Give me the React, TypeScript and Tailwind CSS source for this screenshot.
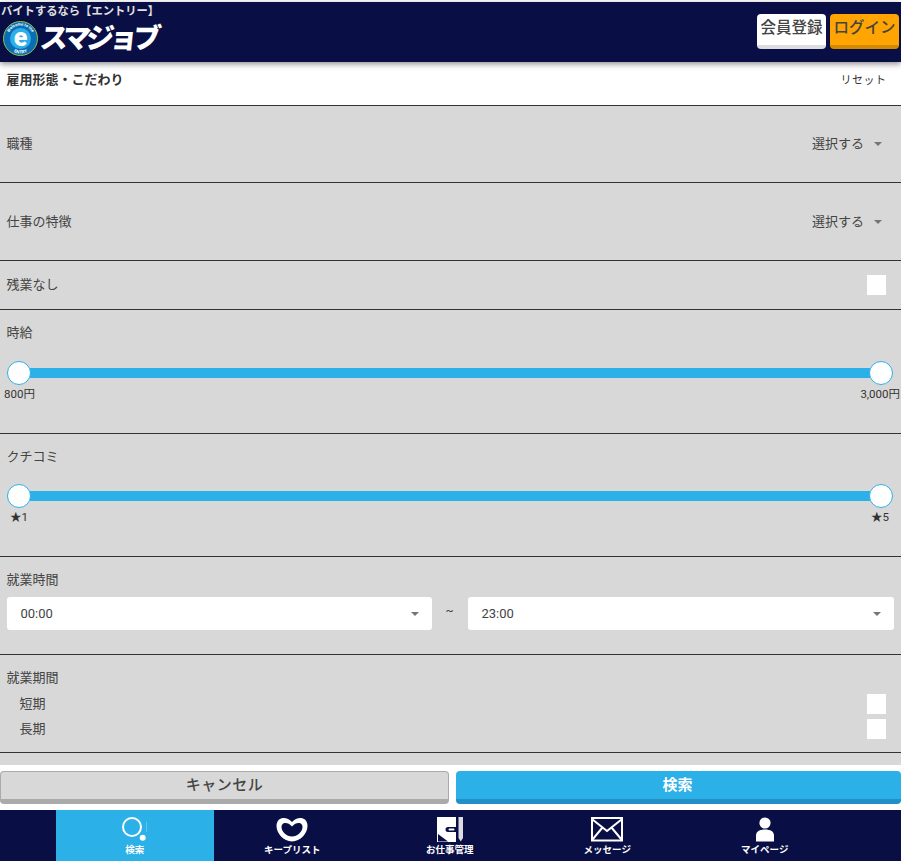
import { ReactNode } from 'react'

const FONT = "font-['Roboto','Noto_Sans_CJK_JP',sans-serif]"

function Caret() {
  return <span className="h-0 w-0 border-x-[4.5px] border-t-[4.5px] border-x-transparent border-t-[#757575]" />
}

function Row({ className, children }: { className: string; children: ReactNode }) {
  return <div className={`border-b border-[#333] px-[6.5px] ${className}`}>{children}</div>
}

function SelectRow({ label, height }: { label: string; height: string }) {
  return (
    <Row className={`flex items-center justify-between ${height}`}>
      <span className="text-[13px] text-[#444]">{label}</span>
      <span className="flex items-center gap-[10px] pr-[12.5px] text-[13px] text-[#444]">
        選択する
        <Caret />
      </span>
    </Row>
  )
}

function Check() {
  return <span className="mr-[8.5px] h-[20px] w-[19px] bg-white" />
}

function Slider({ min, max, labels }: { min: string; max: string; labels: string }) {
  return (
    <div className={`relative mx-[-6.5px] ${labels}`}>
      <div className="mx-[19px] h-[10px] bg-[#2cb0e8]" />
      <span className="absolute top-[-7px] left-[7px] h-[24px] w-[24px] rounded-full border border-[#2cb0e8] bg-white" />
      <span className="absolute top-[-7px] right-[8px] h-[24px] w-[24px] rounded-full border border-[#2cb0e8] bg-white" />
      <div className="mt-[8px] flex justify-between text-[11.5px] leading-[16px] text-[#333]">
        <span className="pl-[var(--edge-l)]">{min}</span>
        <span className="pr-[var(--edge-r)]">{max}</span>
      </div>
    </div>
  )
}

function TimeSelect({ value, className }: { value: string; className: string }) {
  return (
    <div className={`flex h-[33px] items-center justify-between rounded-[3px] bg-white pr-[13px] pl-[14px] text-[13px] ${className}`}>
      {value}
      <Caret />
    </div>
  )
}

function NavItem({ label, active, children }: { label: string; active?: boolean; children: ReactNode }) {
  return (
    <div className={`flex w-[157.5px] flex-col items-center pt-[7px] ${active ? 'bg-[#2cb0e8]' : ''}`}>
      <div className="h-[25px]">{children}</div>
      <span className="mt-[2px] text-[9.5px] leading-[12px] font-bold text-white">{label}</span>
    </div>
  )
}

function LogoMark() {
  return (
    <svg width="35" height="35" viewBox="0 0 35 35" className="shrink-0">
      <defs>
        <path id="ring-top" d="M4.500 17.500a13 13 0 0 1 26 0" />
        <path id="ring-bottom" d="M2.500 17.500a15 15 0 0 0 30 0" />
      </defs>
      <circle cx="17.500" cy="17.500" r="17" fill="#0b6db5" stroke="#8cc63f" strokeWidth="1" />
      <circle cx="17.500" cy="17.500" r="10.500" fill="#2cb0e8" />
      <text fontSize="4" fontWeight="700" fill="#fff" textAnchor="middle">
        <textPath href="#ring-top" startOffset="50%">Welcome to the</textPath>
      </text>
      <text fontSize="4.500" fontWeight="700" fill="#fff" textAnchor="middle">
        <textPath href="#ring-bottom" startOffset="50%">ENTRY</textPath>
      </text>
      <text x="17.500" y="25" fontSize="25" fontWeight="900" fill="#fff" textAnchor="middle">e</text>
    </svg>
  )
}

export default function App() {
  return (
    <div className={`flex h-[861px] w-[901px] flex-col overflow-hidden bg-white text-[#333] ${FONT}`}>
      <header className="z-10 mt-[2px] flex h-[60px] shrink-0 items-start justify-between bg-[#090f45] shadow-[0_2px_6px_rgba(0,0,0,0.45)]">
        <div className="pt-[1px] pl-[1px]">
          <div className="text-[11.3px] leading-[18px] font-bold text-[#e0e0e0]">バイトするなら【エントリー】</div>
          <div className="flex items-center gap-[2px] pl-[2px]">
            <LogoMark />
            <span className="-skew-x-6 text-[28px] leading-[30px] font-black tracking-[-4.5px] text-white">スマジョブ</span>
          </div>
        </div>
        <div className="flex gap-[4px] pt-[12px] pr-[2px]">
          <button className="h-[35px] w-[69px] rounded-[4px] border-b-[4px] border-[#dcdce2] bg-white pb-[1px] text-[15.5px] leading-none font-medium text-[#444]">会員登録</button>
          <button className="h-[35px] w-[69px] rounded-[4px] border-b-[4px] border-[#d48a00] bg-[#ffa400] pb-[1px] text-[15.5px] leading-none font-medium text-[#444]">ログイン</button>
        </div>
      </header>

      <div className="flex h-[44px] shrink-0 justify-between border-b border-[#333] px-[6.5px] pt-[9px]">
        <span className="text-[13px] leading-[18px] font-bold">雇用形態・こだわり</span>
        <span className="pt-[1px] pr-[8px] text-[11px] leading-[18px] tracking-[0.5px]">リセット</span>
      </div>

      <main className="min-h-0 flex-1 bg-[#d8d8d8] text-[#444]">
        <SelectRow label="職種" height="h-[77px]" />
        <SelectRow label="仕事の特徴" height="h-[78px]" />
        <Row className="flex h-[49px] items-center justify-between">
          <span className="text-[13px]">残業なし</span>
          <Check />
        </Row>
        <Row className="h-[124px] pt-[14px]">
          <div className="text-[13px] leading-[18px]">時給</div>
          <Slider min="800円" max="3,000円" labels="mt-[26px] [--edge-l:4px] [--edge-r:1px]" />
        </Row>
        <Row className="h-[123px] pt-[14px]">
          <div className="text-[13px] leading-[18px]">クチコミ</div>
          <Slider min="★1" max="★5" labels="mt-[25px] [--edge-l:10px] [--edge-r:12px]" />
        </Row>
        <Row className="h-[98px] pt-[14px]">
          <div className="text-[13px] leading-[18px]">就業時間</div>
          <div className="mt-[8px] flex items-center">
            <TimeSelect value="00:00" className="w-[425px]" />
            <span className="w-[36px] pb-[5px] text-center text-[12px]">~</span>
            <TimeSelect value="23:00" className="w-[426.5px]" />
          </div>
        </Row>
        <Row className="h-[98px] pt-[14px]">
          <div className="text-[13px] leading-[18px]">就業期間</div>
          <div className="mt-[4px] flex h-[25px] items-center justify-between pl-[13px] text-[13px]">
            短期
            <Check />
          </div>
          <div className="flex h-[25px] items-center justify-between pl-[13px] text-[13px]">
            長期
            <Check />
          </div>
        </Row>
      </main>

      <div className="flex h-[45px] shrink-0 gap-[7px] pt-[6px] pb-[6px]">
        <button className="h-[33px] w-[449px] rounded-[4px] border border-b-[5px] border-[#aaa] bg-[#d8d8d8] text-[15px] leading-none font-medium tracking-[0.5px] text-[#444]">キャンセル</button>
        <button className="h-[33px] flex-1 rounded-[4px] border-b-[5px] border-[#2290c6] bg-[#2cb0e8] pr-[2px] text-[15px] leading-none font-bold text-white">検索</button>
      </div>

      <nav className="flex h-[51px] shrink-0 bg-[#090f45] pl-[56px]">
        <NavItem label="検索" active>
          <svg width="26" height="25" viewBox="0 0 26 25" fill="none">
            <circle cx="10" cy="10" r="9" stroke="#fff" strokeWidth="2" />
            <path d="M24.500 5v10" stroke="#fff" strokeWidth="0.500" opacity="0.5" />
            <circle cx="20.700" cy="20.700" r="3" fill="#fff" />
          </svg>
        </NavItem>
        <NavItem label="キープリスト">
          <svg width="32" height="25" viewBox="0 0 32 25">
            <path d="M16 5C13 1.5 9.5 0.5 6.5 1 2.5 1.8 0.5 5 0.5 9c0 7 7 15.5 15.5 15.5S31.500 16 31.500 9c0-4-2-7.200-6-8C22.500 0.500 19 1.500 16 5z" fill="#fff" />
            <path d="M16 9.500C13.500 6.500 10.500 5.500 8.500 6 6.500 6.500 5.500 8 5.500 10c0 4.500 5 9.500 10.500 9.500S26.500 14.500 26.500 10c0-2-1-3.500-3-4-2-0.500-5 0.500-7.500 3.500z" fill="#090f45" />
          </svg>
        </NavItem>
        <NavItem label="お仕事管理">
          <svg width="26" height="25" viewBox="0 0 26 25">
            <path d="M0 0h19v10h-8a2.500 2.500 0 0 0 0 5h8v10H0z" fill="#fff" />
            <rect x="11.500" y="11.500" width="6" height="2" rx="1" fill="#fff" />
            <path d="M1 24.500V17l10 7.500z" fill="#090f45" />
            <path d="M21.500 0h4.500v21l-2.250 3.500-2.250-3.500z" fill="#dcdce2" />
          </svg>
        </NavItem>
        <NavItem label="メッセージ">
          <svg width="32" height="25" viewBox="0 0 32 25" fill="none" stroke="#fff" strokeWidth="2">
            <rect x="1" y="1" width="30" height="22.500" />
            <path d="M1.500 2.500L16 14 30.500 2.500M1.500 22.500L11.500 10.500M30.500 22.500L20.500 10.500" />
          </svg>
        </NavItem>
        <NavItem label="マイページ">
          <svg width="18" height="25" viewBox="0 0 18 25" fill="#fff">
            <circle cx="9" cy="6" r="5.600" />
            <path d="M0 24.500v-6C0 14.500 3.500 12.500 9 12.500s9 2 9 6v6z" />
          </svg>
        </NavItem>
      </nav>
    </div>
  )
}
